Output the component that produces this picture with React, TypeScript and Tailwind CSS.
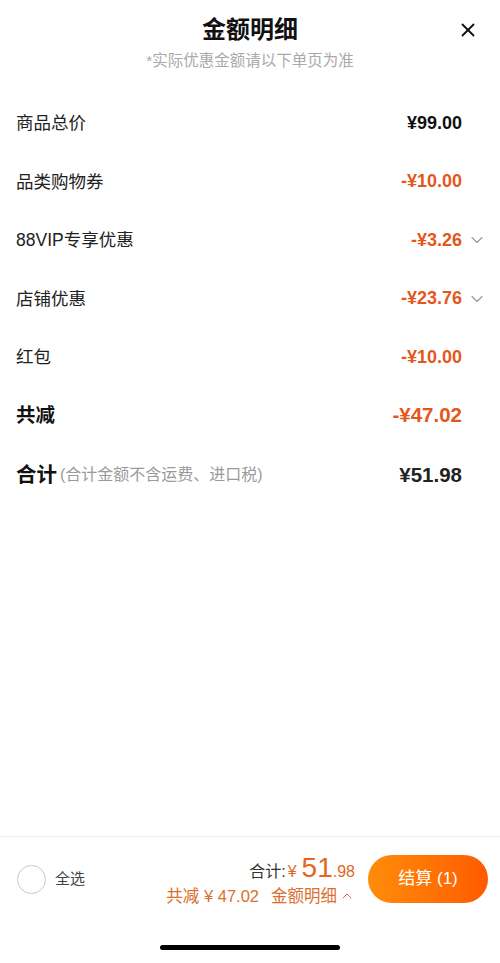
import { X, ChevronDown, ChevronUp } from "lucide-react";

type Row = {
    label: string;
    value: string;
    orange?: boolean;
    chevron?: boolean;
};

const rows: Row[] = [
    { label: "商品总价", value: "¥99.00" },
    { label: "品类购物券", value: "-¥10.00", orange: true },
    { label: "88VIP专享优惠", value: "-¥3.26", orange: true, chevron: true },
    { label: "店铺优惠", value: "-¥23.76", orange: true, chevron: true },
    { label: "红包", value: "-¥10.00", orange: true },
];

export default function App() {
    return (
        <div className="w-[500px] h-[963px] bg-white flex flex-col font-['Liberation_Sans','Noto_Sans_CJK_SC',sans-serif] text-[#111]">
            {/* header */}
            <div className="relative flex flex-col items-center pt-[15px]">
                <span className="text-[24px] leading-[30px] font-bold">金额明细</span>
                <span className="mt-[6px] text-[15.5px] leading-[20px] text-[#aaa]">*实际优惠金额请以下单页为准</span>
                <button className="absolute right-[21px] top-[19px] text-[#111]">
                    <X className="w-[22px] h-[22px]" strokeWidth={2} />
                </button>
            </div>

            {/* detail rows */}
            <div className="mt-[23px] flex flex-col">
                {rows.map((row) => (
                    <div key={row.label} className="h-[58.5px] flex items-center pl-[16px]">
                        <span className="text-[17.5px] text-[#222]">{row.label}</span>
                        <div className="flex-1" />
                        <span className={`text-[18px] font-bold ${row.orange ? "text-[#e4571c]" : "text-[#111]"}`}>
                            {row.value}
                        </span>
                        <div className="w-[38px] flex justify-start pl-[5px]">
                            {row.chevron && <ChevronDown className="w-[20px] h-[20px] text-[#999]" strokeWidth={1.3} />}
                        </div>
                    </div>
                ))}

                <div className="h-[58.5px] flex items-center pl-[16px]">
                    <span className="text-[19.5px] font-bold">共减</span>
                    <div className="flex-1" />
                    <span className="text-[20.5px] font-bold text-[#e4571c]">-¥47.02</span>
                    <div className="w-[38px]" />
                </div>

                <div className="h-[60px] flex items-center pl-[16px]">
                    <span className="text-[20.5px] font-bold">合计</span>
                    <span className="ml-[3px] text-[16px] text-[#9a9a9a]">(合计金额不含运费、进口税)</span>
                    <div className="flex-1" />
                    <span className="text-[20.5px] font-bold text-[#222]">¥51.98</span>
                    <div className="w-[38px]" />
                </div>
            </div>

            <div className="flex-1" />

            {/* bottom bar */}
            <div className="border-t border-[#ececec] flex flex-col">
                <div className="h-[84px] flex items-center pl-[17px] pr-[12px]">
                    <div className="w-[29px] h-[29px] rounded-full border-[1.5px] border-[#c8c8c8]" />
                    <span className="ml-[9px] text-[15px] text-[#444]">全选</span>
                    <div className="flex-1" />
                    <div className="flex flex-col items-end mr-[13px]">
                        <div className="flex items-baseline leading-none">
                            <span className="text-[16px] text-[#333]">合计:</span>
                            <span className="ml-[2px] text-[16px] text-[#e4661f]">¥</span>
                            <span className="ml-[5px] text-[28px] text-[#e4661f]">51</span>
                            <span className="text-[16px] text-[#e4661f]">.98</span>
                        </div>
                        <div className="mt-[6px] flex items-center text-[16.5px] leading-none text-[#d9702f]">
                            <span>共减 ¥ 47.02</span>
                            <span className="ml-[12px]">金额明细</span>
                            <ChevronUp className="ml-[2px] w-[16px] h-[16px]" strokeWidth={1.5} />
                        </div>
                    </div>
                    <button className="w-[120px] h-[48px] rounded-full bg-gradient-to-r from-[#ff8c0a] to-[#ff5a00] text-white text-[17px]">
                        结算 (1)
                    </button>
                </div>
                <div className="h-[42px] flex justify-center items-start pt-[24px]">
                    <div className="w-[180px] h-[5px] rounded-full bg-black" />
                </div>
            </div>
        </div>
    );
}
